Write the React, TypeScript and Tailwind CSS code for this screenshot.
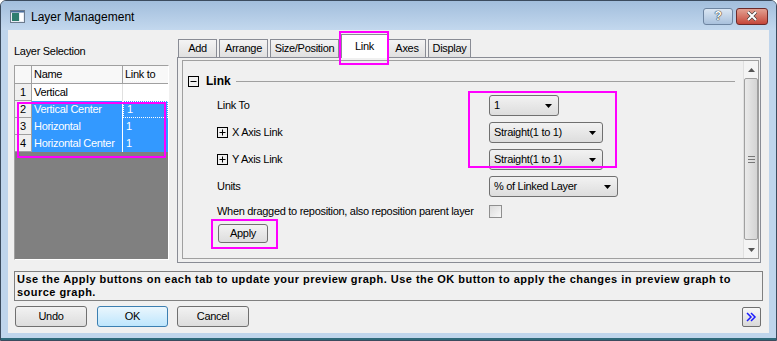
import React from 'react';

const font = "font-['Liberation_Sans',Arial,sans-serif]";

type LayerRow = { id: number; name: string; link: string; selected: boolean };

const rows: LayerRow[] = [
  { id: 1, name: 'Vertical', link: '', selected: false },
  { id: 2, name: 'Vertical Center', link: '1', selected: true },
  { id: 3, name: 'Horizontal', link: '1', selected: true },
  { id: 4, name: 'Horizontal Center', link: '1', selected: true },
];

// tab widths measured off the dialog
const tabs = [
  { label: 'Add', w: 'w-[39px]' },
  { label: 'Arrange', w: 'w-[49px]' },
  { label: 'Size/Position', w: 'w-[69px]' },
  { label: 'Link', w: 'w-[47px]' },
  { label: 'Axes', w: 'w-[38px]' },
  { label: 'Display', w: 'w-[43px]' },
];

const Arrow = () => (
  <svg width="7" height="4" viewBox="0 0 7 4" className="shrink-0">
    <path d="M0 0h7L3.5 4z" fill="#000" />
  </svg>
);

const Dropdown: React.FC<{ value: string; width: string }> = ({ value, width }) => (
  <div
    className={`${width} h-[21px] flex items-center justify-between pl-[4px] pr-[6px] rounded-[3px] border border-[#707070] bg-gradient-to-b from-[#f2f2f2] to-[#dddddd] text-[11px] text-black`}
  >
    <span>{value}</span>
    <Arrow />
  </div>
);

const PlusMinus: React.FC<{ minus?: boolean }> = ({ minus }) => (
  <svg width="11" height="11" viewBox="0 0 11 11" className="shrink-0">
    <rect x="0.5" y="0.5" width="10" height="10" fill="none" stroke="#000" />
    <path d="M2.5 5.5h6" stroke="#000" />
    {!minus && <path d="M5.5 2.5v6" stroke="#000" />}
  </svg>
);

const Button: React.FC<{ label: string; width: string; height?: string; primary?: boolean }> = ({
  label,
  width,
  height = 'h-[21px]',
  primary,
}) => (
  <div
    className={`${width} ${height} flex items-center justify-center rounded-[3px] border text-[11px] text-black ${
      primary
        ? 'border-[#3c7fb1] bg-gradient-to-b from-[#eaf6fd] to-[#bee6fd]'
        : 'border-[#707070] bg-gradient-to-b from-[#f2f2f2] to-[#dddddd]'
    }`}
  >
    {label}
  </div>
);

const App: React.FC = () => {
  return (
    <div className={`w-[777px] h-[341px] ${font} text-[11px] tracking-[-0.3px] text-black bg-white`}>
      <div className="relative w-[777px] h-[341px] flex flex-col rounded-t-[6px] border border-[#3b4b5e] bg-[#bfd5ec] overflow-hidden">
        {/* title bar */}
        <div className="h-[29px] shrink-0 flex items-center pl-[9px] pr-[8px] bg-gradient-to-b from-[#a2bedc] to-[#c3d8ee]">
          <svg width="15" height="13" viewBox="0 0 15 13" className="mr-[6px] mt-[2px]">
            <rect x="0.5" y="0.5" width="14" height="12" fill="#e8eef5" stroke="#6b7a8c" />
            <rect x="2" y="3" width="7" height="8" fill="#2f7d6e" />
            <rect x="10" y="3" width="3" height="8" fill="#ffffff" />
            <rect x="1" y="1" width="13" height="1.5" fill="#4a6d9a" />
          </svg>
          <span className="text-[12px] tracking-normal text-black mt-[2px]">Layer Management</span>
          <div className="ml-auto flex items-center gap-[3px] mt-[1px]">
            <div className="w-[30px] h-[17px] rounded-[3px] border border-[#6d84a0] bg-gradient-to-b from-[#dbe6f3] to-[#a9c1dc] flex items-center justify-center text-white font-bold text-[12px] [text-shadow:0_0_1px_#000,0_0_1px_#000]">
              ?
            </div>
            <div className="w-[32px] h-[17px] rounded-[3px] border border-[#6b2a2a] bg-gradient-to-b from-[#e2a092] to-[#c4453a] flex items-center justify-center">
              <svg width="12" height="10" viewBox="0 0 12 10">
                <path d="M2 1l8 8M10 1l-8 8" stroke="#3a3a3a" strokeWidth="3.2" />
                <path d="M2 1l8 8M10 1l-8 8" stroke="#fff" strokeWidth="2" />
              </svg>
            </div>
          </div>
        </div>

        {/* client area */}
        <div className="mx-[7px] h-[303px] shrink-0 bg-[#f0f0f0] flex flex-col">
          <div className="flex h-[233px]">
            {/* layer selection */}
            <div className="w-[155px] ml-[6px] flex flex-col">
              <div className="h-[35px] flex items-center pt-[7px]">Layer Selection</div>
              <div className="relative h-[195px] border border-[#a0a0a0] bg-[#808080] border-r-white border-b-white">
                <div className="bg-white">
                  <div className="flex h-[18px] border-b border-[#a0a0a0] bg-[#f8f8f8]">
                    <div className="w-[17px] border-r border-[#a0a0a0]" />
                    <div className="w-[91px] border-r border-[#a0a0a0] pl-[2px] flex items-center">Name</div>
                    <div className="flex-1 pl-[2px] flex items-center">Link to</div>
                  </div>
                  {rows.map((r) => (
                    <div key={r.id} className="flex h-[17px]">
                      <div className="w-[17px] bg-[#f0f0f0] border-r border-b border-[#a0a0a0] flex items-center justify-center">
                        {r.id}
                      </div>
                      <div
                        className={`w-[91px] border-r pl-[2px] flex items-center ${
                          r.selected ? 'bg-[#3399ff] text-white border-white' : 'border-[#e0e0e0]'
                        }`}
                      >
                        {r.name}
                      </div>
                      <div
                        className={`flex-1 pl-[3px] flex items-center ${
                          r.selected ? 'bg-[#3399ff] text-white' : ''
                        } ${r.id === 2 ? 'border border-dotted border-white' : ''}`}
                      >
                        {r.link}
                      </div>
                    </div>
                  ))}
                </div>
                <div className="absolute left-[2px] top-[36px] w-[149px] h-[56px] border-[2px] border-[#ff00ff]" />
              </div>
            </div>

            {/* tabs + panel */}
            <div className="ml-[8px] w-[584px] flex flex-col">
              <div className="flex items-end h-[27px] pl-[1px]">
                {tabs.map((t) =>
                  t.label === 'Link' ? (
                    <div
                      key={t.label}
                      className={`relative -mb-[1px] z-10 ${t.w} h-[24px] flex items-start justify-center pt-[3px] bg-white border border-b-0 border-[#898c95]`}
                    >
                      {t.label}
                      <div className="absolute -left-[3px] -top-[4px] w-[50px] h-[34px] border-[2px] border-[#ff00ff]" />
                    </div>
                  ) : (
                    <div
                      key={t.label}
                      className={`${t.w} h-[18px] mr-[2px] flex items-center justify-center bg-gradient-to-b from-[#f4f4f4] to-[#e0e0e0] border border-b-0 border-[#898c95]`}
                    >
                      {t.label}
                    </div>
                  )
                )}
              </div>
              <div className="h-[206px] border border-[#898c95] bg-[#f0f0f0] pl-[4px] pt-[2px] pr-[1px] pb-[3px]">
                <div className="h-full flex border border-[#a0a0a0]">
                  <div className="relative flex-1 flex flex-col">
                    <div className="flex items-center h-[12px] mt-[14px] ml-[5px]">
                      <PlusMinus minus />
                      <span className="ml-[7px] font-bold text-[12px] tracking-normal">Link</span>
                      <div className="flex-1 ml-[5px] mr-[8px] h-[1px] bg-[#a0a0a0]" />
                    </div>
                    <div className="ml-[34px] mt-[8px] flex flex-col gap-[6px]">
                      <div className="flex items-center h-[21px]">
                        <span className="w-[272px]">Link To</span>
                        <Dropdown value="1" width="w-[70px]" />
                      </div>
                      <div className="flex items-center h-[21px]">
                        <span className="w-[272px] flex items-center gap-[4px]">
                          <PlusMinus />X Axis Link
                        </span>
                        <Dropdown value="Straight(1 to 1)" width="w-[114px]" />
                      </div>
                      <div className="flex items-center h-[21px]">
                        <span className="w-[272px] flex items-center gap-[4px]">
                          <PlusMinus />Y Axis Link
                        </span>
                        <Dropdown value="Straight(1 to 1)" width="w-[114px]" />
                      </div>
                      <div className="flex items-center h-[21px]">
                        <span className="w-[272px]">Units</span>
                        <Dropdown value="% of Linked Layer" width="w-[129px]" />
                      </div>
                      <div className="flex items-center h-[16px]">
                        <span className="w-[272px] whitespace-nowrap">
                          When dragged to reposition, also reposition parent layer
                        </span>
                        <div className="w-[13px] h-[13px] border border-[#8f8f8f] bg-gradient-to-br from-[#dcdcdc] to-[#f8f8f8]" />
                      </div>
                      <div className="relative -mt-[1px] ml-[1px] w-[50px]">
                        <Button label="Apply" width="w-[50px]" height="h-[19px]" />
                        <div className="absolute -left-[7px] -top-[5px] w-[67px] h-[30px] border-[2px] border-[#ff00ff]" />
                      </div>
                    </div>
                    <div className="absolute left-[285px] top-[30px] w-[149px] h-[77px] border-[2px] border-[#ff00ff]" />
                  </div>
                  {/* scrollbar */}
                  <div className="w-[15px] bg-[#f4f4f4] border-l border-[#e0e0e0] flex flex-col items-center">
                    <div className="h-[17px] flex items-center justify-center">
                      <svg width="7" height="4" viewBox="0 0 7 4">
                        <path d="M0 4h7L3.5 0z" fill="#555" />
                      </svg>
                    </div>
                    <div className="w-[14px] flex-1 mb-[18px] rounded-[2px] border border-[#a0a0a0] bg-gradient-to-r from-[#eaeaea] to-[#d4d4d4] flex items-center justify-center">
                      <svg width="7" height="7" viewBox="0 0 7 7">
                        <path d="M0 0.5h7M0 3.5h7M0 6.5h7" stroke="#777" />
                      </svg>
                    </div>
                    <div className="h-[17px] -mt-[17px] flex items-center justify-center">
                      <svg width="7" height="4" viewBox="0 0 7 4">
                        <path d="M0 0h7L3.5 4z" fill="#555" />
                      </svg>
                    </div>
                  </div>
                </div>
              </div>
            </div>
          </div>

          {/* info box */}
          <div className="mt-[8px] mx-[6px] h-[30px] border border-[#808080] px-[2px] font-bold text-[11px] tracking-[0.47px] leading-[13px] pt-[1px]">
            Use the Apply buttons on each tab to update your preview graph. Use the OK button to apply the changes in preview graph to source graph.
          </div>

          {/* buttons */}
          <div className="mt-[5px] mx-[7px] flex items-center">
            <Button label="Undo" width="w-[72px]" />
            <div className="ml-[10px]">
              <Button label="OK" width="w-[71px]" primary />
            </div>
            <div className="ml-[9px]">
              <Button label="Cancel" width="w-[72px]" />
            </div>
            <div className="ml-auto mr-[1px] w-[19px] h-[20px] rounded-[2px] border border-[#707070] bg-gradient-to-b from-[#f8f8f8] to-[#d8d8d8] flex items-center justify-center">
              <svg width="11" height="10" viewBox="0 0 11 10">
                <path d="M1 1l4 4-4 4M5 1l4 4-4 4" fill="none" stroke="#1a1aff" strokeWidth="1.5" />
              </svg>
            </div>
          </div>
        </div>

        {/* bottom frame */}
        <div className="flex-1 border-b-[2px] border-[#2e6a7a]" />
      </div>
    </div>
  );
};

export default App;
